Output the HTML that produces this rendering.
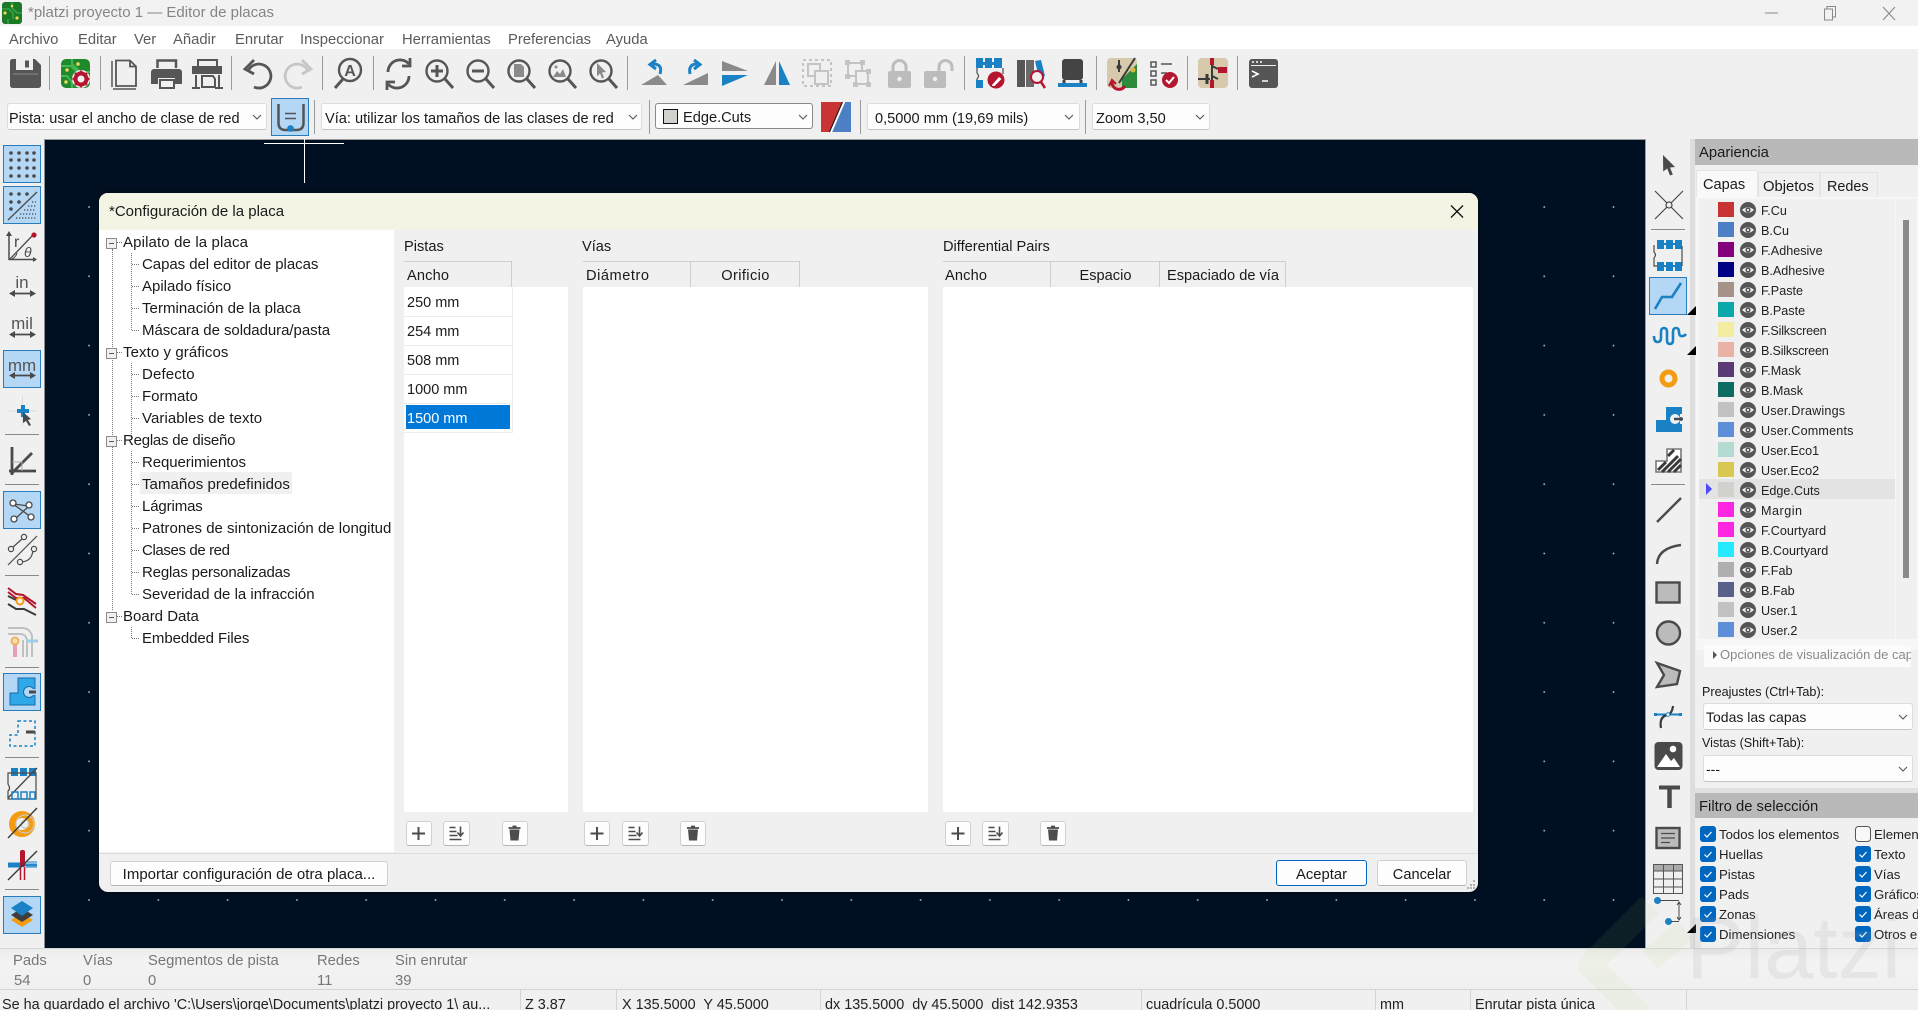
<!DOCTYPE html>
<html lang="es"><head><meta charset="utf-8"><title>platzi proyecto 1 — Editor de placas</title>
<style>
html,body{margin:0;padding:0;width:1918px;height:1010px;overflow:hidden;background:#f0f0f0}
body{position:relative;font-family:"Liberation Sans",sans-serif;color:#1a1a1a}
.b,.t{position:absolute}
.t{white-space:nowrap;line-height:20px;height:20px;font-size:15px;margin-top:1px}
.c{background:#fdfdfd;border:1px solid #dcdcdc;border-bottom-color:#c4c4c4;border-radius:3px;box-sizing:border-box}
.tb{background:#fdfdfd;border:1px solid #d0d0d0;border-bottom-color:#b5b5b5;border-radius:3px;box-sizing:border-box}
.h{background:#f0f0f0;border-top:1px solid #cfcfcf;border-right:1px solid #cfcfcf;box-sizing:border-box;top:261px;height:26px}
.l{font-size:12.6px;left:1761px;color:#222}
.d{border-left:1px dotted #777}
.e{border-top:1px dotted #777;height:0}
.m{color:#5a5a5a;top:29px;font-size:14.8px}
.g{color:#777;font-size:14.8px}
.s{font-size:14.4px;top:994px;color:#222}
.f{font-size:13.2px;color:#222}
</style></head><body>

<!-- bars -->
<div class="b" style="left:0;top:0;width:1918px;height:26px;background:#f2f2f2"></div>
<div class="b" style="left:0;top:26px;width:1918px;height:23px;background:#fff"></div>
<div class="b" style="left:0;top:49px;width:1918px;height:90px;background:#f0f0f0"></div>
<!-- canvas -->
<div class="b" style="left:45px;top:139px;width:1601px;height:809px;background-color:#001023;border-top:1px solid #9a9a9a;box-sizing:border-box;background-image:radial-gradient(circle at 1px 1px,#aab2ba 0,#aab2ba .7px,transparent 1.1px);background-size:69.3px 69.3px;background-position:43px 66px"></div>
<div class="b" style="left:44px;top:139px;width:1px;height:809px;background:#8a8f94"></div>
<!-- combos -->
<div class="b c" style="left:7px;top:103px;width:260px;height:27px"></div>
<div class="b" style="left:271px;top:98px;width:38px;height:38px;background:#b3d7f5;border:1px solid #2a7dbd;box-sizing:border-box"></div>
<div class="b c" style="left:321px;top:103px;width:321px;height:27px"></div>
<div class="b" style="left:655px;top:103px;width:158px;height:26px;background:#fdfdfd;border:1px solid #8a8a8a;border-radius:3px;box-sizing:border-box"></div>
<div class="b" style="left:663px;top:109px;width:15px;height:15px;background:#d0d2cd;border:1px solid #111;box-sizing:border-box"></div>
<div class="b c" style="left:867px;top:103px;width:213px;height:27px"></div>
<div class="b c" style="left:1092px;top:103px;width:118px;height:27px"></div>

<!-- left toolbar buttons -->
<div class="b" style="left:3px;top:145px;width:38px;height:38px;background:#b3d7f5;border:1px solid #2a7dbd;box-sizing:border-box"></div>
<div class="b" style="left:3px;top:186px;width:38px;height:38px;background:#b3d7f5;border:1px solid #2a7dbd;box-sizing:border-box"></div>
<div class="b" style="left:3px;top:350px;width:38px;height:38px;background:#b3d7f5;border:1px solid #2a7dbd;box-sizing:border-box"></div>
<div class="b" style="left:3px;top:491px;width:38px;height:38px;background:#b3d7f5;border:1px solid #2a7dbd;box-sizing:border-box"></div>
<div class="b" style="left:3px;top:673px;width:38px;height:38px;background:#b3d7f5;border:1px solid #2a7dbd;box-sizing:border-box"></div>
<div class="b" style="left:3px;top:896px;width:38px;height:38px;background:#b3d7f5;border:1px solid #2a7dbd;box-sizing:border-box"></div>
<!-- right toolbar -->
<div class="b" style="left:1645px;top:139px;width:1px;height:809px;background:#9aa0a4"></div>
<div class="b" style="left:1690px;top:139px;width:5px;height:809px;background:#dedede"></div>
<div class="b" style="left:1649px;top:277px;width:38px;height:38px;background:#b3d7f5;border:1px solid #2a7dbd;box-sizing:border-box"></div>

<!-- appearance panel -->
<div class="b" style="left:1695px;top:139px;width:223px;height:26px;background:#b9b9b9"></div>
<div class="b" style="left:1696px;top:170px;width:62px;height:27px;background:#f9f9f9;border:1px solid #e4e4e4;border-bottom:0;box-sizing:border-box"></div>
<div class="b" style="left:1758px;top:172px;width:62px;height:25px;background:#f0f0f0;border:1px solid #e4e4e4;border-bottom:0;box-sizing:border-box"></div>
<div class="b" style="left:1820px;top:172px;width:58px;height:25px;background:#f0f0f0;border:1px solid #e4e4e4;border-bottom:0;box-sizing:border-box"></div>
<div class="b" style="left:1696px;top:197px;width:222px;height:453px;background:#f7f7f7"></div>
<div class="b" style="left:1699px;top:199px;width:196px;height:440px;background:#f0f0f0"></div>
<div class="b" style="left:1896px;top:199px;width:21px;height:440px;background:#f0f0f0"></div>
<div class="b" style="left:1903px;top:220px;width:6px;height:358px;background:#8a8a8a"></div>
<div class="b" style="left:1699px;top:479px;width:196px;height:20px;background:#e3e3e3"></div>
<div class="b" style="left:1704px;top:645px;width:207px;height:22px;background:#fbfbfb"></div>
<div class="b c" style="left:1703px;top:703px;width:210px;height:27px"></div>
<div class="b c" style="left:1703px;top:755px;width:210px;height:27px"></div>
<div class="b" style="left:1695px;top:788px;width:223px;height:5px;background:#e0e0e0"></div>
<div class="b" style="left:1695px;top:793px;width:223px;height:25px;background:#b9b9b9"></div>

<!-- message panel / status -->
<div class="b" style="left:0;top:948px;width:1918px;height:41px;background:linear-gradient(#ececec,#f3f3f3 30%,#f0f0f0);border-top:1px solid #d8d8d8;box-sizing:border-box"></div>
<div class="b" style="left:0;top:989px;width:1918px;height:1px;background:#d4d4d4"></div>
<div class="b" style="left:520px;top:990px;width:1px;height:20px;background:#d4d4d4"></div>
<div class="b" style="left:616px;top:990px;width:1px;height:20px;background:#d4d4d4"></div>
<div class="b" style="left:820px;top:990px;width:1px;height:20px;background:#d4d4d4"></div>
<div class="b" style="left:1141px;top:990px;width:1px;height:20px;background:#d4d4d4"></div>
<div class="b" style="left:1375px;top:990px;width:1px;height:20px;background:#d4d4d4"></div>
<div class="b" style="left:1470px;top:990px;width:1px;height:20px;background:#d4d4d4"></div>
<div class="b" style="left:1686px;top:990px;width:1px;height:20px;background:#d4d4d4"></div>

<!-- dialog -->
<div class="b" style="left:99px;top:193px;width:1379px;height:699px;background:#f0f0f0;border-radius:9px;box-shadow:0 0 8px rgba(0,0,0,.5);overflow:hidden">
  <div class="b" style="left:0;top:0;width:1379px;height:37px;background:#f3f4e3"></div>
  <div class="b" style="left:0;top:37px;width:295px;height:622px;background:#fff"></div>
  <div class="b" style="left:0;top:660px;width:1379px;height:1px;background:#dcdcdc"></div>
</div>
<div class="b" style="left:140px;top:472px;width:152px;height:22px;background:#f0f0f0"></div>
<!-- tree lines -->
<div class="b d" style="left:112px;top:249px;height:188px"></div>
<div class="b d" style="left:112px;top:447px;height:163px"></div>
<div class="b d" style="left:131px;top:253px;height:77px"></div>
<div class="b d" style="left:131px;top:363px;height:77px"></div>
<div class="b d" style="left:131px;top:451px;height:143px"></div>
<div class="b d" style="left:131px;top:627px;height:11px"></div>
<div class="b e" style="left:117px;top:242px;width:5px"></div>
<div class="b e" style="left:117px;top:352px;width:5px"></div>
<div class="b e" style="left:117px;top:440px;width:5px"></div>
<div class="b e" style="left:117px;top:616px;width:5px"></div>
<div class="b e" style="left:132px;top:264px;width:7px"></div>
<div class="b e" style="left:132px;top:286px;width:7px"></div>
<div class="b e" style="left:132px;top:308px;width:7px"></div>
<div class="b e" style="left:132px;top:330px;width:7px"></div>
<div class="b e" style="left:132px;top:374px;width:7px"></div>
<div class="b e" style="left:132px;top:396px;width:7px"></div>
<div class="b e" style="left:132px;top:418px;width:7px"></div>
<div class="b e" style="left:132px;top:462px;width:7px"></div>
<div class="b e" style="left:132px;top:484px;width:7px"></div>
<div class="b e" style="left:132px;top:506px;width:7px"></div>
<div class="b e" style="left:132px;top:528px;width:7px"></div>
<div class="b e" style="left:132px;top:550px;width:7px"></div>
<div class="b e" style="left:132px;top:572px;width:7px"></div>
<div class="b e" style="left:132px;top:594px;width:7px"></div>
<div class="b e" style="left:132px;top:638px;width:7px"></div>
<!-- grids -->
<div class="b" style="left:404px;top:287px;width:164px;height:525px;background:#fff"></div>
<div class="b" style="left:583px;top:287px;width:345px;height:525px;background:#fff"></div>
<div class="b" style="left:943px;top:287px;width:530px;height:525px;background:#fff"></div>
<div class="b h" style="left:404px;width:108px"></div>
<div class="b h" style="left:583px;width:108px"></div>
<div class="b h" style="left:691px;width:109px"></div>
<div class="b h" style="left:943px;width:108px"></div>
<div class="b h" style="left:1051px;width:109px"></div>
<div class="b h" style="left:1160px;width:126px"></div>
<div class="b" style="left:404px;top:316px;width:108px;height:1px;background:#ececec"></div>
<div class="b" style="left:404px;top:345px;width:108px;height:1px;background:#ececec"></div>
<div class="b" style="left:404px;top:374px;width:108px;height:1px;background:#ececec"></div>
<div class="b" style="left:404px;top:403px;width:108px;height:1px;background:#ececec"></div>
<div class="b" style="left:404px;top:432px;width:108px;height:1px;background:#ececec"></div>
<div class="b" style="left:512px;top:287px;width:1px;height:146px;background:#ececec"></div>
<div class="b" style="left:406px;top:405px;width:104px;height:24px;background:#0078d7"></div>
<!-- grid buttons -->
<div class="b tb" style="left:406px;top:821px;width:26px;height:25px"></div>
<div class="b tb" style="left:443px;top:821px;width:27px;height:25px"></div>
<div class="b tb" style="left:502px;top:821px;width:26px;height:25px"></div>
<div class="b tb" style="left:584px;top:821px;width:26px;height:25px"></div>
<div class="b tb" style="left:622px;top:821px;width:27px;height:25px"></div>
<div class="b tb" style="left:680px;top:821px;width:26px;height:25px"></div>
<div class="b tb" style="left:945px;top:821px;width:26px;height:25px"></div>
<div class="b tb" style="left:982px;top:821px;width:27px;height:25px"></div>
<div class="b tb" style="left:1040px;top:821px;width:26px;height:25px"></div>
<div class="b tb" style="left:110px;top:861px;width:278px;height:25px"></div>
<div class="b tb" style="left:1276px;top:860px;width:91px;height:26px;border:1.5px solid #0067c0"></div>
<div class="b tb" style="left:1377px;top:860px;width:90px;height:26px"></div>

<!-- ICONS -->
<svg class="b" style="left:0;top:0" width="1918" height="1010" viewBox="0 0 1918 1010" fill="none">
<defs>
<g id="eye"><circle r="8" fill="#555"/><path d="M-6 0Q0-5.500 6 0Q0 5.500-6 0Z" fill="#f0f0f0"/><circle r="2.600" fill="#555"/><circle r="1.100" fill="#f0f0f0"/></g>
<g id="chk"><rect x="0" y="-8" width="16" height="16" rx="3" fill="#0067c0"/><path d="M4.500 0.500l2.500 2.500 4.500-5" stroke="#fff" stroke-width="1.200"/></g>
<g id="plus"><path d="M-6.500 0h13M0-6.500v13" stroke="#4c4c4c" stroke-width="2"/></g>
<g id="sort"><path d="M-7-6h6M-7-2h7M-7 2h8M-7 6h12" stroke="#4c4c4c" stroke-width="1.600"/><path d="M4-7v9M1 -1l3 3.500 3-3.500" stroke="#4c4c4c" stroke-width="1.600"/></g>
<g id="trash"><path d="M-5-4h10l-1 11h-8z" fill="#4c4c4c"/><path d="M-6-5.500h12M-2-7h4" stroke="#4c4c4c" stroke-width="1.800"/></g>
<g id="chev"><path d="M-4-2l4 4 4-4" stroke="#555" stroke-width="1.100"/></g>
<g id="tri"><path d="M9-9V0H0z" fill="#000"/></g>
</defs>

<!-- app icon -->
<rect x="2" y="2" width="20" height="22" rx="3" fill="#1a7a25"/>
<path d="M2 9h7l4 4v6M12 2v6l5 5h5M8 24v-5" stroke="#3aa048" stroke-width="1.600"/>
<circle cx="5" cy="13" r="1.600" fill="#e8d85a"/><circle cx="17" cy="18" r="1.600" fill="#e8d85a"/><circle cx="12" cy="6" r="1.300" fill="#e8d85a"/>

<!-- window controls -->
<path d="M1765 13h13" stroke="#8a8a8a" stroke-width="1"/>
<path d="M1824.500 9h8v11h-8zM1827 9V6.500h8.500V17h-3" stroke="#8a8a8a" stroke-width="1"/>
<path d="M1883 7l12 13M1895 7l-12 13" stroke="#8a8a8a" stroke-width="1.100"/>

<!-- separators top toolbar -->
<g stroke="#9a9a9a" stroke-width="1">
<path d="M49.500 56v34M100.500 56v34M231.500 56v34M322.500 56v34M373.500 56v34M627.500 56v34M964.500 56v34M1096.500 56v34M1187.500 56v34M1237.500 56v34"/>
<path d="M314.500 100v34M649.500 100v34M860.500 100v34M1085.500 100v34"/>
</g>

<!-- save -->
<path d="M10 61.500a2.500 2.500 0 0 1 2.500-2.500H35l6 6v20.500a2.500 2.500 0 0 1-2.500 2.500h-26A2.500 2.500 0 0 1 10 85.500z" fill="#565656"/>
<rect x="16" y="59" width="17" height="11" fill="#f0f0f0"/><rect x="25" y="60.500" width="4" height="7" fill="#565656"/>
<path d="M13 74h25" stroke="#8a8a8a" stroke-width="1"/>
<!-- board setup -->
<rect x="61" y="59" width="29" height="29" rx="5" fill="#1f8a2c"/>
<path d="M61 66h10l6 6M72 59v5l8 8h10M61 76h6l5 6v6" stroke="#46b652" stroke-width="2"/>
<circle cx="67" cy="70" r="1.800" fill="#e8d85a"/><circle cx="78" cy="64" r="1.800" fill="#e8d85a"/><circle cx="66" cy="82" r="1.800" fill="#e8d85a"/>
<circle cx="81" cy="79" r="9" fill="#f0f0f0"/><circle cx="81" cy="79" r="5.500" stroke="#b4152f" stroke-width="4"/>
<path d="M81 70.500v3M81 84.500v3M72.500 79h3M86.500 79h3M75 73l2 2M85 83l2 2M75 85l2-2M85 75l2-2" stroke="#b4152f" stroke-width="2.400"/>
<!-- page -->
<path d="M116 60.500h14l6 6v19.500h-20zM130 60.500v6h6" stroke="#565656" stroke-width="1.800"/>
<path d="M112 61v26M113 89h23" stroke="#565656" stroke-width="1.500"/>
<!-- print -->
<path d="M157.500 68V60.500h18.500V68" stroke="#565656" stroke-width="2.500"/>
<path d="M151 72a3 3 0 0 1 3-3h25a3 3 0 0 1 3 3v12h-7v-6h-17v6h-7z" fill="#565656"/>
<path d="M160 80h14v8h-14z" stroke="#565656" stroke-width="2"/>
<!-- plot -->
<path d="M198 66V60h19v6" stroke="#565656" stroke-width="2"/>
<rect x="192" y="66" width="30" height="8" fill="#565656"/>
<path d="M196 75v13M219 75v13M192 88h8M215 88h8" stroke="#565656" stroke-width="2"/>
<path d="M202 76h11l2 3v8h-13z" stroke="#565656" stroke-width="2"/>
<!-- undo/redo -->
<path d="M248 71A12 12 0 1 1 254 87" stroke="#565656" stroke-width="2.800"/>
<path d="M254 60l-9 9 9 5" stroke="#565656" stroke-width="2.800"/>
<path d="M308 71A12 12 0 1 0 302 87" stroke="#c6c6c6" stroke-width="2.800"/>
<path d="M302 60l9 9-9 5" stroke="#c6c6c6" stroke-width="2.800"/>
<!-- find -->
<circle cx="350" cy="70" r="11" stroke="#565656" stroke-width="2.400"/><path d="M343 79l-8 9" stroke="#565656" stroke-width="3"/>
<text x="350" y="76" font-size="16" font-family="Liberation Sans" font-weight="bold" fill="#565656" text-anchor="middle">A</text>
<!-- refresh -->
<path d="M388 72a12 12 0 0 1 21-8" stroke="#565656" stroke-width="2.800"/><path d="M410 58v8h-8" stroke="#565656" stroke-width="2.800"/>
<path d="M409 76a12 12 0 0 1-21 8" stroke="#565656" stroke-width="2.800"/><path d="M387 90v-8h8" stroke="#565656" stroke-width="2.800"/>
<!-- zooms -->
<g stroke="#565656" stroke-width="2.400">
<circle cx="437" cy="71" r="10.500"/><path d="M445 79l8 9" stroke-width="3"/><path d="M431 71h12M437 65v12" stroke-width="3"/>
<circle cx="478" cy="71" r="10.500"/><path d="M486 79l8 9" stroke-width="3"/><path d="M472 71h12" stroke-width="3"/>
<circle cx="519" cy="71" r="10.500"/><path d="M527 79l8 9" stroke-width="3"/>
<circle cx="560" cy="71" r="10.500"/><path d="M568 79l8 9" stroke-width="3"/>
<circle cx="601" cy="71" r="10.500"/><path d="M609 79l8 9" stroke-width="3"/>
</g>
<path d="M514 64h7l3 3v10h-10z" fill="#8a8a8a"/>
<path d="M553 77l4-6 3 3 3-5 3 8z" fill="#8a8a8a"/><circle cx="556" cy="67" r="1.500" fill="#8a8a8a"/>
<path d="M597 63l9 9-4 .5 2 5-2 1-2-5-3 3z" fill="#8a8a8a"/>
<!-- rotate -->
<path d="M641 85l17-10 9 10z" fill="#8a8a8a"/>
<path d="M660 74q3-10-7-10" stroke="#1a81c4" stroke-width="3"/><path d="M656 60l-6 4.500 6 4.500" stroke="#1a81c4" stroke-width="3"/>
<path d="M683 85l25-12v12z" fill="#8a8a8a"/>
<path d="M690 74q-2-10 7-10" stroke="#1a81c4" stroke-width="3"/><path d="M694 60l6 4.500-6 4.500" stroke="#1a81c4" stroke-width="3"/>
<!-- flip/mirror -->
<path d="M722 61l26 10h-26z" fill="#8a8a8a"/><path d="M722 75h26l-26 11z" fill="#1a81c4"/>
<path d="M764 85l12-24v24z" fill="#8a8a8a"/><path d="M779 61l11 24h-11z" fill="#1a81c4"/>
<!-- group -->
<rect x="803" y="60" width="28" height="26" stroke="#c4c4c4" stroke-width="2" stroke-dasharray="3 3"/>
<rect x="808" y="64" width="12" height="12" stroke="#c4c4c4" stroke-width="2"/><rect x="815" y="71" width="13" height="13" fill="#f0f0f0" stroke="#c4c4c4" stroke-width="2"/>
<!-- ungroup -->
<rect x="848" y="63" width="14" height="13" stroke="#c4c4c4" stroke-width="2"/><rect x="856" y="71" width="12" height="13" fill="#f0f0f0" stroke="#c4c4c4" stroke-width="2"/>
<g fill="#c4c4c4"><rect x="845" y="60" width="5" height="5"/><rect x="860" y="60" width="5" height="5"/><rect x="845" y="74" width="5" height="5"/><rect x="866" y="69" width="5" height="5"/><rect x="866" y="82" width="5" height="5"/><rect x="853" y="82" width="5" height="5"/></g>
<!-- locks -->
<path d="M893 71v-4a6.500 6.500 0 0 1 13 0v4" stroke="#bcbcbc" stroke-width="3"/><rect x="888" y="71" width="23" height="17" rx="2" fill="#bcbcbc"/><circle cx="899.500" cy="79" r="2.200" fill="#f0f0f0"/>
<path d="M939 71v-4a6.500 6.500 0 0 1 13 0v4" stroke="#bcbcbc" stroke-width="3"/><rect x="924" y="71" width="22" height="17" rx="2" fill="#bcbcbc"/><circle cx="935" cy="79" r="2.200" fill="#f0f0f0"/>
<!-- board setup 2 -->
<g fill="#1a81c4"><rect x="976" y="58" width="7" height="10"/><rect x="985" y="58" width="7" height="10"/><rect x="994" y="58" width="8" height="10"/><rect x="976" y="62" width="26" height="3"/><rect x="976" y="80" width="7" height="8"/></g>
<path d="M977 68v5q3 3 0 6v1M1003 68v6" stroke="#565656" stroke-width="1.300"/>
<circle cx="996" cy="80" r="8.500" fill="#b4152f"/><path d="M992 85l7-8 2.500 2-7 7h-2.500z" fill="#fff"/>
<!-- libs -->
<rect x="1017" y="60" width="8" height="27" fill="#565656"/><rect x="1026" y="60" width="8" height="27" fill="#6a6a6a"/>
<path d="M1035 61l6-1 4 16-6 2z" fill="#1a81c4"/>
<circle cx="1037" cy="77" r="6" fill="#f0f0f0" stroke="#b4152f" stroke-width="2"/><path d="M1041 82l4 6" stroke="#b4152f" stroke-width="2.500"/>
<!-- footprint -->
<rect x="1062" y="59" width="21" height="21" rx="3" fill="#444"/><path d="M1064 80v4M1081 80v4" stroke="#444" stroke-width="3"/>
<rect x="1058" y="83" width="29" height="4" fill="#1a81c4"/>
<!-- drc route -->
<rect x="1107" y="58" width="30" height="30" rx="4" fill="#d6c9ac"/><path d="M1122 88V79l15-15v24z" fill="#2d8c3a"/>
<path d="M1119 60v12M1135 58l-16 25" stroke="#3a3a3a" stroke-width="2"/><circle cx="1119" cy="67" r="2.500" fill="#3a3a3a"/><circle cx="1133" cy="70" r="2.500" fill="#d8b83a"/>
<path d="M1125 86a7 7 0 0 1-13-4" stroke="#b4152f" stroke-width="3"/><path d="M1109 86l3-6 4 4" stroke="#b4152f" stroke-width="2"/>
<!-- checklist -->
<g stroke="#565656" stroke-width="1.500"><rect x="1151" y="62" width="5" height="5"/><rect x="1151" y="71" width="5" height="5"/><rect x="1151" y="80" width="5" height="5"/><path d="M1161 64h11M1161 73h6"/></g>
<circle cx="1170" cy="80" r="8" fill="#b4152f"/><path d="M1166 80l3 3 5-6" stroke="#fff" stroke-width="2"/>
<!-- schematic -->
<rect x="1198" y="58" width="30" height="30" rx="4" fill="#d6c9ac"/>
<path d="M1212 58v30M1198 79h12M1212 66l6 3M1212 76l6 3" stroke="#3a3a3a" stroke-width="2"/>
<path d="M1212 58v7M1212 80v8" stroke="#b4152f" stroke-width="4"/><rect x="1218" y="67" width="9" height="6" fill="#b4152f"/><path d="M1207 74v10" stroke="#3a3a3a" stroke-width="3"/>
<!-- terminal -->
<rect x="1249" y="59" width="29" height="29" rx="3" fill="#565656"/><rect x="1251" y="65" width="25" height="1" fill="#f0f0f0"/>
<circle cx="1253" cy="62" r="1" fill="#fff"/><circle cx="1257" cy="62" r="1" fill="#fff"/><circle cx="1261" cy="62" r="1" fill="#fff"/>
<path d="M1252 71l6 3-6 3M1262 81h6" stroke="#fff" stroke-width="1.600"/>

<!-- toolbar 2 -->
<use href="#chev" x="257" y="117"/><use href="#chev" x="633" y="117"/><use href="#chev" x="803" y="117"/><use href="#chev" x="1069" y="117"/><use href="#chev" x="1200" y="117"/>
<path d="M278.500 104v19q0 7 7 7h11q7 0 7-7v-19" stroke="#545454" stroke-width="2.500"/>
<path d="M285 113.500h11M285 118.500h11" stroke="#545454" stroke-width="1.400"/><circle cx="290.500" cy="128.500" r="3.300" fill="#1a81c4"/>
<path d="M821 102h22l-13 30h-9z" fill="#c83434"/><path d="M845 102h6v30h-19z" fill="#4d7fc4"/><path d="M844 102l-13 30" stroke="#fff" stroke-width="2.200"/><path d="M842.500 102l-13 30" stroke="#111" stroke-width="1"/>

<!-- crosshair -->
<path d="M264 143.500h80M304.500 139v44" stroke="#fff" stroke-width="1"/>

<!-- LEFT TOOLBAR -->
<g fill="#4a4a4a">
<circle cx="11" cy="153" r="1.800"/><circle cx="19" cy="153" r="1.800"/><circle cx="27" cy="153" r="1.800"/><circle cx="34" cy="153" r="1.800"/>
<circle cx="11" cy="160" r="1.800"/><circle cx="19" cy="160" r="1.800"/><circle cx="27" cy="160" r="1.800"/><circle cx="34" cy="160" r="1.800"/>
<circle cx="11" cy="168" r="1.800"/><circle cx="19" cy="168" r="1.800"/><circle cx="27" cy="168" r="1.800"/><circle cx="34" cy="168" r="1.800"/>
<circle cx="11" cy="176" r="1.800"/><circle cx="19" cy="176" r="1.800"/><circle cx="27" cy="176" r="1.800"/><circle cx="34" cy="176" r="1.800"/>
<circle cx="11" cy="194" r="1.800"/><circle cx="19" cy="194" r="1.800"/><circle cx="27" cy="194" r="1.800"/>
<circle cx="11" cy="202" r="1.800"/><circle cx="19" cy="202" r="1.800"/><circle cx="11" cy="209" r="1.800"/>
</g>
<path d="M8 220l29-28" stroke="#4a4a4a" stroke-width="1.300"/>
<path d="M16 218h20M20 214h16M24 210h12M28 206h8M32 202h4" stroke="#4a4a4a" stroke-width="1.300" stroke-dasharray="1.300 1.700"/>
<path d="M9 260V233M9 259.500H36" stroke="#4a4a4a" stroke-width="1.500"/><path d="M6 236l3-5 3 5zM33 257l4 2.500-4 2.500z" fill="#4a4a4a"/>
<path d="M10 259l23-24" stroke="#4a4a4a" stroke-width="1.300"/><circle cx="34" cy="235" r="2.600" fill="#b4152f"/>
<path d="M12 259q4-2 5-6" stroke="#4a4a4a"/>
<text x="14" y="247" font-size="16" fill="#4a4a4a">r</text><text x="24" y="257" font-size="14" font-style="italic" fill="#4a4a4a">θ</text>
<g fill="#555" font-size="17" text-anchor="middle"><text x="22" y="288">in</text><text x="22" y="329">mil</text><text x="22" y="371">mm</text></g>
<g stroke="#4a4a4a" stroke-width="1.800"><path d="M12 293.500h21M12 334.500h21M12 375.500h21"/></g>
<g fill="#4a4a4a"><path d="M9 293.500l6-3.500v7zM36 293.500l-6-3.500v7zM9 334.500l6-3.500v7zM36 334.500l-6-3.500v7zM9 375.500l6-3.500v7zM36 375.500l-6-3.500v7z"/></g>
<path d="M8 411h29M22.500 396v30" stroke="#ddd"/>
<path d="M17 411h12M23 405v12" stroke="#1a81c4" stroke-width="4"/>
<path d="M23 412l8 7-3 1 3 5-2 1-3-5-3 2z" fill="#4a4a4a"/>
<path d="M5 434.500h34M5 484.500h34M5 575.500h34M5 667.500h34M5 757.500h34M5 889.500h34" stroke="#8a8a8a"/>
<path d="M12 447v28M9 471h27" stroke="#4a4a4a" stroke-width="2.800"/><path d="M11 474l21-21" stroke="#4a4a4a" stroke-width="2.800"/><path d="M12 462h10v9" stroke="#aaa"/>
<path d="M13 504l18 13M29 506l-15 14M13 504l16 2" stroke="#4a4a4a" stroke-width="1.300"/>
<g fill="#fff" stroke="#4a4a4a" stroke-width="1.300"><circle cx="13" cy="503" r="3"/><circle cx="29" cy="505" r="3"/><circle cx="14" cy="519" r="3"/><circle cx="31" cy="517" r="3"/></g>
<path d="M8 565l29-29" stroke="#4a4a4a" stroke-width="1.200"/>
<path d="M12 548l10-9M20 562q12 0 13-12" stroke="#4a4a4a" stroke-width="1.200"/>
<g fill="#f0f0f0" stroke="#4a4a4a" stroke-width="1.200"><circle cx="11" cy="549" r="2.600"/><circle cx="24" cy="537" r="2.600"/><circle cx="20" cy="562" r="2.600"/><circle cx="34" cy="549" r="2.600"/></g>
<path d="M8 588l8 6 7 1 13 9" stroke="#b4152f" stroke-width="2"/>
<path d="M8 592l8 6h8l12 10" stroke="#b4152f" stroke-width="2"/><path d="M8 604l8 5h8l12 6" stroke="#3a3a3a" stroke-width="2"/><path d="M8 596l8 4" stroke="#3a3a3a" stroke-width="2"/>
<circle cx="20" cy="601" r="3.500" fill="#f0f0f0" stroke="#f39c11" stroke-width="2"/>
<path d="M8 628h14q8 0 10 8v21M8 634h12q6 0 7 6v17M23 640v17" stroke="#c0c0c0" stroke-width="2"/>
<path d="M26 641h12" stroke="#9fcde8" stroke-width="3"/><rect x="13" y="645" width="4" height="12" fill="#e8a0b0"/>
<circle cx="15" cy="641" r="3.500" fill="#f5e0b0" stroke="#f0b060" stroke-width="2"/>
<path d="M10 705V693H18V678H35V705Z" fill="#2fa8e8" stroke="#1a6aa5" stroke-width="1"/>
<circle cx="29" cy="692" r="5.500" fill="#b3d7f5" stroke="#1a6aa5"/><path d="M31 689h4.500v6h-4.500z" fill="#b3d7f5"/><path d="M29 692h7" stroke="#4a4a4a" stroke-width="3"/>
<path d="M18 721h17v25H10v-11h8z" stroke="#1a81c4" stroke-width="1.500" stroke-dasharray="3 2.500"/><path d="M26 732h9" stroke="#4a4a4a" stroke-width="3"/>
<g fill="#1a81c4"><rect x="11" y="768" width="7" height="8"/><rect x="20" y="768" width="7" height="8"/><rect x="29" y="768" width="7" height="8"/></g>
<path d="M8 773h28v26H8v-8q3-2 0-7z" stroke="#4a4a4a" stroke-width="1.200"/><path d="M8 798l29-30" stroke="#4a4a4a" stroke-width="1.400"/>
<g stroke="#1a81c4" stroke-width="1.500"><rect x="12" y="792" width="6" height="7"/><rect x="21" y="792" width="6" height="7"/><rect x="30" y="792" width="5" height="7"/></g>
<circle cx="22" cy="824" r="9.500" stroke="#f39c11" stroke-width="7"/><circle cx="25" cy="824" r="9" stroke="#c8c8c8" stroke-width="1.200"/><circle cx="25" cy="824" r="4" stroke="#c8c8c8" stroke-width="1.200"/>
<path d="M8 838l29-30" stroke="#3a3a3a" stroke-width="1.400"/>
<path d="M8 865h29" stroke="#2a87c4" stroke-width="3"/><path d="M8 865h13" stroke="#1a81c4" stroke-width="5"/><path d="M26 862h11M26 867h11" stroke="#5aa8d8" stroke-width="1.500"/>
<rect x="20" y="850" width="5" height="17" rx="2" fill="#b4152f"/><path d="M20.500 867v13M24.500 867v13" stroke="#b4152f" stroke-width="1.500"/>
<path d="M8 880l29-29" stroke="#3a3a3a" stroke-width="1.400"/>
<path d="M11 920l11 7 11-7-11-7z" fill="#f39c11"/><path d="M11 915l11 7 11-7-11-7z" fill="#3e3e3e"/><path d="M11 908l11-7 11 7-11 8z" fill="#1a81c4"/>

<!-- RIGHT TOOLBAR -->
<path d="M1663 155l12 12-5 .5 2.800 7-2.800 1-2.800-7-4 3z" fill="#4a4a4a"/>
<path d="M1655 191l28 28M1683 191l-28 28" stroke="#4a4a4a" stroke-width="1.200"/><circle cx="1669" cy="205" r="3" fill="#f0f0f0" stroke="#4a4a4a" stroke-width="1.200"/>
<path d="M1651 229.500h34M1651 484.500h34" stroke="#8a8a8a"/>
<g fill="#1a81c4"><rect x="1657" y="240" width="7" height="9"/><rect x="1666" y="240" width="7" height="9"/><rect x="1675" y="240" width="7" height="9"/><rect x="1657" y="262" width="7" height="9"/><rect x="1666" y="262" width="7" height="9"/><rect x="1675" y="262" width="7" height="9"/><rect x="1657" y="243" width="25" height="2"/><rect x="1657" y="265" width="25" height="2"/></g>
<path d="M1654 245v7q3 3 0 6v8h3M1682 246v20" stroke="#4a4a4a" stroke-width="1.200"/>
<path d="M1655 309l7-12h10l9-14" stroke="#1a81c4" stroke-width="2.600"/>
<use href="#tri" x="1687" y="315"/>
<path d="M1654 336q0 6 3.500 6t3.500-4v-6q0-4 3-4t3 4v8q0 4 3 4t3-4v-8q0-4 3-4t3 4q0 5 4 4 2-.5 3-2" stroke="#1a81c4" stroke-width="2.600"/>
<use href="#tri" x="1687" y="355"/>
<circle cx="1668.500" cy="378.500" r="6.500" stroke="#f39c11" stroke-width="5"/>
<path d="M1656 432v-12h10v-13h16v25z" fill="#1a81c4"/><circle cx="1675" cy="419" r="5" fill="#f0f0f0"/><path d="M1674 419h9" stroke="#4a4a4a" stroke-width="2.500"/><path d="M1680 414h3v3h-3zM1680 421h3v3h-3z" fill="#f0f0f0"/>
<path d="M1656 472v-11h11v-12h14v23z" fill="#fff" stroke="#777" stroke-width="1.600"/>
<path d="M1658 470l8-8M1662 472l16-16M1668 472l13-13M1674 472l7-7M1668 456l6-6" stroke="#3a3a3a" stroke-width="3"/>
<path d="M1657 522l24-24" stroke="#4a4a4a" stroke-width="2.400"/>
<path d="M1657 564q1-16 24-19" stroke="#4a4a4a" stroke-width="2.400"/>
<rect x="1656.500" y="582.500" width="23" height="20" fill="#bbb" stroke="#4a4a4a" stroke-width="2.400"/>
<circle cx="1668.500" cy="633" r="11.500" fill="#bbb" stroke="#4a4a4a" stroke-width="2.400"/>
<path d="M1657 663l23 8-3 13-20 3 7-12z" fill="#bbb" stroke="#4a4a4a" stroke-width="2.400"/>
<path d="M1655 714.500h26" stroke="#1a81c4" stroke-width="2"/><path d="M1661 728q-2-11 6-13 5-1 6-9" stroke="#3a3a3a" stroke-width="2.200"/>
<rect x="1654" y="713" width="3" height="3" fill="#1a81c4"/><rect x="1679" y="713" width="3" height="3" fill="#1a81c4"/><circle cx="1668" cy="714.500" r="1.800" fill="#fff" stroke="#1a81c4"/>
<rect x="1654.500" y="742" width="28" height="28" rx="4" fill="#4a4a4a"/><circle cx="1673" cy="749" r="3.300" fill="#fff"/><path d="M1657 767l9-13 5 7 3-3 6 9z" fill="#fff"/>
<path d="M1659 787.500h21" stroke="#4a4a4a" stroke-width="4"/><path d="M1669.500 787v21" stroke="#4a4a4a" stroke-width="4.500"/>
<rect x="1656.500" y="828" width="23" height="20" fill="#bbb" stroke="#4a4a4a" stroke-width="2.400"/><path d="M1661 833.500h14M1661 838h14M1661 842.500h9" stroke="#4a4a4a" stroke-width="1.300"/>
<rect x="1654" y="865" width="29" height="6" fill="#aaa"/><path d="M1653.500 864.500h29v29h-29zM1653.500 871h29M1653.500 879h29M1653.500 887h29M1663.500 864.500v29M1673.500 864.500v29" stroke="#555" stroke-width="1"/>
<circle cx="1657.500" cy="900.500" r="3.500" fill="#1a81c4"/><circle cx="1668.500" cy="921.500" r="3.500" fill="#1a81c4"/>
<path d="M1660 900.500h19M1671 921.500h8M1679 903v16M1677 905l2-3 2 3M1677 917l2 3 2-3" stroke="#4a4a4a" stroke-width="1"/>
<use href="#tri" x="1687" y="933"/>

<!-- eyes -->
<use href="#eye" x="1748" y="210"/><use href="#eye" x="1748" y="230"/><use href="#eye" x="1748" y="250"/><use href="#eye" x="1748" y="270"/><use href="#eye" x="1748" y="290"/><use href="#eye" x="1748" y="310"/><use href="#eye" x="1748" y="330"/><use href="#eye" x="1748" y="350"/><use href="#eye" x="1748" y="370"/><use href="#eye" x="1748" y="390"/><use href="#eye" x="1748" y="410"/><use href="#eye" x="1748" y="430"/><use href="#eye" x="1748" y="450"/><use href="#eye" x="1748" y="470"/><use href="#eye" x="1748" y="490"/><use href="#eye" x="1748" y="510"/><use href="#eye" x="1748" y="530"/><use href="#eye" x="1748" y="550"/><use href="#eye" x="1748" y="570"/><use href="#eye" x="1748" y="590"/><use href="#eye" x="1748" y="610"/><use href="#eye" x="1748" y="630"/>
<!-- swatches -->
<g>
<rect x="1718" y="202" width="16" height="15" fill="#c83434"/><rect x="1718" y="222" width="16" height="15" fill="#4d7fc4"/><rect x="1718" y="242" width="16" height="15" fill="#84007c"/><rect x="1718" y="262" width="16" height="15" fill="#000084"/><rect x="1718" y="282" width="16" height="15" fill="#a59288"/><rect x="1718" y="302" width="16" height="15" fill="#0aa8a8"/><rect x="1718" y="322" width="16" height="15" fill="#f2eda1"/><rect x="1718" y="342" width="16" height="15" fill="#e8b2a7"/><rect x="1718" y="362" width="16" height="15" fill="#5c3a75"/><rect x="1718" y="382" width="16" height="15" fill="#0e6b64"/><rect x="1718" y="402" width="16" height="15" fill="#c2c2c2"/><rect x="1718" y="422" width="16" height="15" fill="#5d8fd9"/><rect x="1718" y="442" width="16" height="15" fill="#b4dbd2"/><rect x="1718" y="462" width="16" height="15" fill="#d8c852"/><rect x="1718" y="482" width="16" height="15" fill="#d0d2cd"/><rect x="1718" y="502" width="16" height="15" fill="#ff26e2"/><rect x="1718" y="522" width="16" height="15" fill="#ff26e2"/><rect x="1718" y="542" width="16" height="15" fill="#26e9ff"/><rect x="1718" y="562" width="16" height="15" fill="#afafaf"/><rect x="1718" y="582" width="16" height="15" fill="#58608a"/><rect x="1718" y="602" width="16" height="15" fill="#c2c2c2"/><rect x="1718" y="622" width="16" height="15" fill="#5d8fd9"/>
</g>
<path d="M1706 483l6 6-6 6z" fill="#4a4aff"/>
<path d="M1713 651l4 4-4 4z" fill="#555"/>
<use href="#chev" x="1903" y="717"/><use href="#chev" x="1903" y="769"/>
<!-- checkboxes -->
<use href="#chk" x="1700" y="834"/><use href="#chk" x="1700" y="854"/><use href="#chk" x="1700" y="874"/><use href="#chk" x="1700" y="894"/><use href="#chk" x="1700" y="914"/><use href="#chk" x="1700" y="934"/>
<rect x="1855.500" y="826.500" width="15" height="15" rx="3" fill="#f8f8f8" stroke="#555"/>
<use href="#chk" x="1855" y="854"/><use href="#chk" x="1855" y="874"/><use href="#chk" x="1855" y="894"/><use href="#chk" x="1855" y="914"/><use href="#chk" x="1855" y="934"/>

<!-- dialog icons -->
<path d="M1451 205.500l12 12M1463 205.500l-12 12" stroke="#111" stroke-width="1.300"/>
<g fill="#f0f0f0" stroke="#8a8a8a"><rect x="106.500" y="238.500" width="10" height="10"/><rect x="106.500" y="348.500" width="10" height="10"/><rect x="106.500" y="436.500" width="10" height="10"/><rect x="106.500" y="612.500" width="10" height="10"/></g>
<path d="M109 243.500h5M109 353.500h5M109 441.500h5M109 617.500h5" stroke="#555"/>
<use href="#plus" x="418.500" y="833.500"/><use href="#sort" x="456.500" y="833.500"/><use href="#trash" x="514.500" y="833.500"/>
<use href="#plus" x="597" y="833.500"/><use href="#sort" x="635.500" y="833.500"/><use href="#trash" x="693" y="833.500"/>
<use href="#plus" x="958" y="833.500"/><use href="#sort" x="995.500" y="833.500"/><use href="#trash" x="1053" y="833.500"/>
<g fill="#b0b0b0"><rect x="1473" y="880" width="2" height="2"/><rect x="1470" y="884" width="2" height="2"/><rect x="1473" y="884" width="2" height="2"/><rect x="1467" y="887" width="2" height="2"/><rect x="1470" y="887" width="2" height="2"/><rect x="1473" y="887" width="2" height="2"/></g>
</svg>

<!-- title + menu -->
<div class="t" style="left:28px;top:2px;color:#858585">*platzi proyecto 1 — Editor de placas</div>
<div class="t m" style="left:9px">Archivo</div><div class="t m" style="left:78px">Editar</div><div class="t m" style="left:134px">Ver</div><div class="t m" style="left:173px">Añadir</div><div class="t m" style="left:235px">Enrutar</div><div class="t m" style="left:300px">Inspeccionar</div><div class="t m" style="left:402px">Herramientas</div><div class="t m" style="left:508px">Preferencias</div><div class="t m" style="left:606px">Ayuda</div>

<!-- combos text -->
<div class="t" style="left:9px;top:108px;font-size:14.5px">Pista: usar el ancho de clase de red</div>
<div class="t" style="left:325px;top:108px;font-size:14.6px">Vía: utilizar los tamaños de las clases de red</div>
<div class="t" style="left:683px;top:107px;font-size:14.6px">Edge.Cuts</div>
<div class="t" style="left:875px;top:108px;font-size:14.6px">0,5000 mm (19,69 mils)</div>
<div class="t" style="left:1096px;top:108px;font-size:14.6px">Zoom 3,50</div>

<!-- dialog text -->
<div class="t" style="left:109px;top:201px">*Configuración de la placa</div>
<div class="t" style="left:123px;top:232px;letter-spacing:.13px">Apilato de la placa</div>
<div class="t" style="left:142px;top:254px;letter-spacing:-.05px">Capas del editor de placas</div>
<div class="t" style="left:142px;top:276px">Apilado físico</div>
<div class="t" style="left:142px;top:298px;letter-spacing:.05px">Terminación de la placa</div>
<div class="t" style="left:142px;top:320px;letter-spacing:-.05px">Máscara de soldadura/pasta</div>
<div class="t" style="left:123px;top:342px;letter-spacing:.08px">Texto y gráficos</div>
<div class="t" style="left:142px;top:364px;letter-spacing:.15px">Defecto</div>
<div class="t" style="left:142px;top:386px">Formato</div>
<div class="t" style="left:142px;top:408px;letter-spacing:.07px">Variables de texto</div>
<div class="t" style="left:123px;top:430px;letter-spacing:-.23px">Reglas de diseño</div>
<div class="t" style="left:142px;top:452px;letter-spacing:-.08px">Requerimientos</div>
<div class="t" style="left:142px;top:474px;letter-spacing:.06px">Tamaños predefinidos</div>
<div class="t" style="left:142px;top:496px;letter-spacing:-.13px">Lágrimas</div>
<div class="t" style="left:142px;top:518px">Patrones de sintonización de longitud</div>
<div class="t" style="left:142px;top:540px;letter-spacing:-.38px">Clases de red</div>
<div class="t" style="left:142px;top:562px;letter-spacing:-.17px">Reglas personalizadas</div>
<div class="t" style="left:142px;top:584px">Severidad de la infracción</div>
<div class="t" style="left:123px;top:606px">Board Data</div>
<div class="t" style="left:142px;top:628px;letter-spacing:-.08px">Embedded Files</div>

<div class="t" style="left:404px;top:236px;font-size:14.6px">Pistas</div>
<div class="t" style="left:582px;top:236px;font-size:14.6px">Vías</div>
<div class="t" style="left:943px;top:236px;font-size:14.6px">Differential Pairs</div>
<div class="t" style="left:407px;top:265px;font-size:14.6px;letter-spacing:.15px">Ancho</div>
<div class="t" style="left:586px;top:265px;font-size:14.6px;letter-spacing:.55px">Diámetro</div>
<div class="t" style="left:691px;width:109px;text-align:center;top:265px;font-size:14.6px;letter-spacing:.4px">Orificio</div>
<div class="t" style="left:945px;top:265px;font-size:14.6px;letter-spacing:.15px">Ancho</div>
<div class="t" style="left:1051px;width:109px;text-align:center;top:265px;font-size:14.6px">Espacio</div>
<div class="t" style="left:1160px;width:126px;text-align:center;top:265px;font-size:14.6px">Espaciado de vía</div>
<div class="t" style="left:407px;top:292px;font-size:14.5px">250 mm</div>
<div class="t" style="left:407px;top:321px;font-size:14.5px">254 mm</div>
<div class="t" style="left:407px;top:350px;font-size:14.5px">508 mm</div>
<div class="t" style="left:407px;top:379px;font-size:14.5px">1000 mm</div>
<div class="t" style="left:407px;top:408px;font-size:14.5px;color:#fff">1500 mm</div>

<div class="t" style="left:110px;width:278px;text-align:center;top:864px;font-size:15px">Importar configuración de otra placa...</div>
<div class="t" style="left:1276px;width:91px;text-align:center;top:864px;font-size:14.8px">Aceptar</div>
<div class="t" style="left:1377px;width:90px;text-align:center;top:864px;font-size:14.6px">Cancelar</div>

<!-- appearance text -->
<div class="t" style="left:1699px;top:142px;font-size:14.8px">Apariencia</div>
<div class="t" style="left:1703px;top:174px;font-size:14.6px">Capas</div>
<div class="t" style="left:1763px;top:176px;font-size:14.8px">Objetos</div>
<div class="t" style="left:1827px;top:176px;font-size:14.4px">Redes</div>
<div class="t l" style="top:200px">F.Cu</div><div class="t l" style="top:220px">B.Cu</div><div class="t l" style="top:240px">F.Adhesive</div><div class="t l" style="top:260px">B.Adhesive</div><div class="t l" style="top:280px">F.Paste</div><div class="t l" style="top:300px">B.Paste</div><div class="t l" style="top:320px;letter-spacing:-.2px">F.Silkscreen</div><div class="t l" style="top:340px;letter-spacing:-.2px">B.Silkscreen</div><div class="t l" style="top:360px">F.Mask</div><div class="t l" style="top:380px">B.Mask</div><div class="t l" style="top:400px;letter-spacing:.18px">User.Drawings</div><div class="t l" style="top:420px;letter-spacing:.18px">User.Comments</div><div class="t l" style="top:440px">User.Eco1</div><div class="t l" style="top:460px">User.Eco2</div><div class="t l" style="top:480px">Edge.Cuts</div><div class="t l" style="top:500px;letter-spacing:.5px">Margin</div><div class="t l" style="top:520px">F.Courtyard</div><div class="t l" style="top:540px">B.Courtyard</div><div class="t l" style="top:560px">F.Fab</div><div class="t l" style="top:580px">B.Fab</div><div class="t l" style="top:600px">User.1</div><div class="t l" style="top:620px">User.2</div>
<div class="b" style="left:1720px;top:645px;width:191px;height:22px;overflow:hidden"><div class="t" style="left:0;top:-1px;font-size:13px;color:#8a8a8a">Opciones de visualización de capas</div></div>
<div class="t" style="left:1702px;top:681px;font-size:12.6px">Preajustes (Ctrl+Tab):</div>
<div class="t" style="left:1706px;top:706px;font-size:14px">Todas las capas</div>
<div class="t" style="left:1702px;top:732px;font-size:12.6px">Vistas (Shift+Tab):</div>
<div class="t" style="left:1706px;top:758px;font-size:14px">---</div>
<div class="t" style="left:1699px;top:796px;font-size:14.8px">Filtro de selección</div>
<div class="t f" style="left:1719px;top:824px">Todos los elementos</div><div class="t f" style="left:1719px;top:844px">Huellas</div><div class="t f" style="left:1719px;top:864px">Pistas</div><div class="t f" style="left:1719px;top:884px">Pads</div><div class="t f" style="left:1719px;top:904px">Zonas</div><div class="t f" style="left:1719px;top:924px">Dimensiones</div>
<div class="t f" style="left:1874px;top:824px">Elementos bloqueados</div><div class="t f" style="left:1874px;top:844px">Texto</div><div class="t f" style="left:1874px;top:864px">Vías</div><div class="t f" style="left:1874px;top:884px">Gráficos</div><div class="t f" style="left:1874px;top:904px">Áreas de regla</div><div class="t f" style="left:1874px;top:924px">Otros elementos</div>

<!-- messages -->
<div class="t g" style="left:13px;top:950px">Pads</div><div class="t g" style="left:83px;top:950px">Vías</div><div class="t g" style="left:148px;top:950px">Segmentos de pista</div><div class="t g" style="left:317px;top:950px">Redes</div><div class="t g" style="left:395px;top:950px">Sin enrutar</div>
<div class="t g" style="left:14px;top:970px">54</div><div class="t g" style="left:83px;top:970px">0</div><div class="t g" style="left:148px;top:970px">0</div><div class="t g" style="left:317px;top:970px">11</div><div class="t g" style="left:395px;top:970px">39</div>
<div class="t s" style="left:2px">Se ha guardado el archivo 'C:\Users\jorge\Documents\platzi proyecto 1\ au...</div>
<div class="t s" style="left:525px">Z 3.87</div>
<div class="t s" style="left:622px">X 135.5000&nbsp; Y 45.5000</div>
<div class="t s" style="left:825px">dx 135.5000&nbsp; dy 45.5000&nbsp; dist 142.9353</div>
<div class="t s" style="left:1146px">cuadrícula 0.5000</div>
<div class="t s" style="left:1380px">mm</div>
<div class="t s" style="left:1475px">Enrutar pista única</div>

<!-- watermark -->
<svg class="b" style="left:0;top:0;pointer-events:none" width="1918" height="1010" viewBox="0 0 1918 1010" fill="none">
<path d="M1650 905L1590 965l50 50M1650 960l35-30" stroke="#a8c850" stroke-opacity=".08" stroke-width="24" stroke-linejoin="round"/>
<text x="1686" y="978" font-family="Liberation Sans" font-size="88" fill="#9a9a9a" fill-opacity=".14">Platzi</text>
</svg>
</body></html>
